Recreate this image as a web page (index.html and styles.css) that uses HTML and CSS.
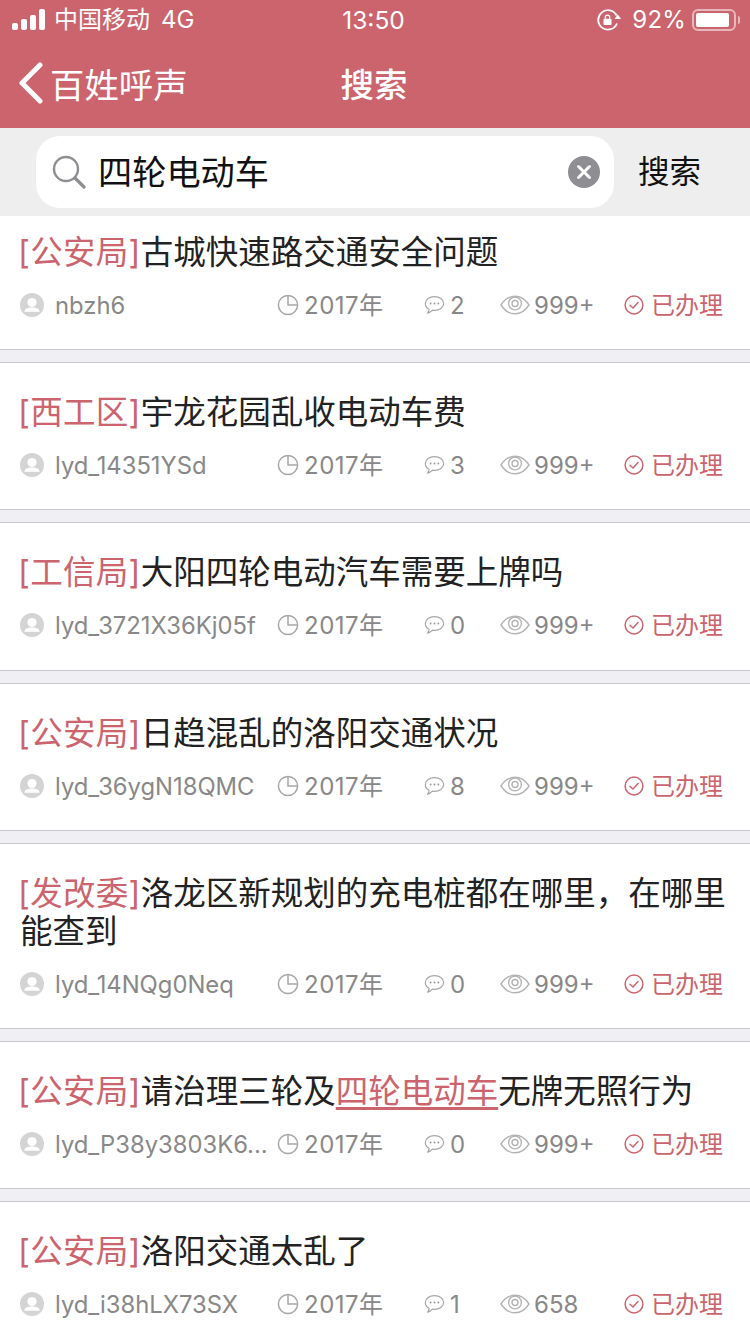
FILE: index.html
```html
<!DOCTYPE html>
<html lang="zh-CN">

<head>
  <meta charset="UTF-8">
  <meta name="viewport" content="width=device-width, initial-scale=1.0">
  <title>搜索</title>
  <link rel="stylesheet" href="styles.css">
</head>

<body>
  <svg class="sprites" width="0" height="0">
    <symbol id="i-user" viewBox="0 0 24 24">
      <circle cx="12" cy="12" r="12" fill="#d4d4d4" />
      <circle cx="12" cy="9.5" r="4.6" fill="#fff" />
      <path d="M4.5 18.2c0-2.4 3.4-3.6 7.5-3.6s7.5 1.2 7.5 3.6v.6h-15z" fill="#fff" />
    </symbol>
    <symbol id="i-clock" viewBox="0 0 22 22">
      <circle cx="11" cy="11" r="9.6" fill="none" stroke="#a8a8a8" stroke-width="1.5" />
      <path d="M11 1.6V11h9.4" fill="none" stroke="#a8a8a8" stroke-width="1.5" />
    </symbol>
    <symbol id="i-comment" viewBox="0 0 22 20">
      <path d="M11 1.2c5.2 0 9.6 3 9.6 7.2s-4.400 7.200-9.600 7.200c-.8 0-1.500-.1-2.200-.2-1.200 1.400-2.900 2.700-5 3.100.9-1 1.500-2.300 1.500-4C2.900 13.300 1.400 11 1.400 8.400 1.400 4.200 5.800 1.200 11 1.200z" fill="none" stroke="#a8a8a8" stroke-width="1.300" stroke-linejoin="round" />
      <circle cx="7" cy="8.400" r="1" fill="#999" />
      <circle cx="11" cy="8.400" r="1" fill="#999" />
      <circle cx="15" cy="8.400" r="1" fill="#999" />
    </symbol>
    <symbol id="i-eye" viewBox="0 0 30 20">
      <path d="M1 10C4.500 4.500 9.500 1.200 15 1.200S25.500 4.500 29 10c-3.500 5.500-8.500 8.800-14 8.800S4.500 15.500 1 10z" fill="none" stroke="#b4b4b4" stroke-width="1.400" />
      <circle cx="15" cy="8.500" r="6.400" fill="none" stroke="#b4b4b4" stroke-width="1.400" />
      <circle cx="15" cy="8.500" r="3" fill="none" stroke="#b4b4b4" stroke-width="1.400" />
    </symbol>
    <symbol id="i-check" viewBox="0 0 20 20">
      <circle cx="10" cy="10" r="8.900" fill="none" stroke="#cb646d" stroke-width="1.500" />
      <path d="M6 10.200l3 2.800 5-5.400" fill="none" stroke="#cb646d" stroke-width="1.500" stroke-linecap="round" stroke-linejoin="round" />
    </symbol>
  </svg>

  <header class="top">
    <div class="status">
      <div class="status-left">
        <span class="signal"><i></i><i></i><i></i><i></i></span>
        <span>中国移动</span>
        <span class="net">4G</span>
      </div>
      <div class="status-time">13:50</div>
      <div class="status-right">
        <svg class="lock" width="24" height="22" viewBox="0 0 24 22">
          <path d="M19.600 6.500A9.700 9.700 0 1 0 20 14.500" fill="none" stroke="#fff" stroke-width="1.800" />
          <path d="M17.500 10h6.500l-3.200-4.500z" fill="#fff" />
          <rect x="6.500" y="9.800" width="8" height="6.200" rx="1" fill="#fff" />
          <path d="M8.300 9.800V8.300a2.200 2.200 0 0 1 4.400 0v1.500" fill="none" stroke="#fff" stroke-width="1.300" />
        </svg>
        <span class="pct">92%</span>
        <span class="battery"><i></i></span>
      </div>
    </div>
    <nav class="nav">
      <div class="back">
        <svg width="26" height="42" viewBox="0 0 26 42">
          <path d="M23 3L5 21l18 18" fill="none" stroke="#fff" stroke-width="5" stroke-linecap="round" stroke-linejoin="round" />
        </svg>
        <span>百姓呼声</span>
      </div>
      <h1 class="nav-title">搜索</h1>
    </nav>
  </header>

  <div class="search">
    <div class="search-box">
      <svg class="search-icon" width="34" height="34" viewBox="0 0 34 34">
        <circle cx="14" cy="14" r="12" fill="none" stroke="#8e8e93" stroke-width="2.400" />
        <path d="M23 23l9 9" fill="none" stroke="#8e8e93" stroke-width="3.200" stroke-linecap="round" />
      </svg>
      <span class="search-text">四轮电动车</span>
      <span class="search-clear">
        <svg width="32" height="32" viewBox="0 0 32 32">
          <circle cx="16" cy="16" r="16" fill="#8e8e93" />
          <path d="M10.500 10.500l11 11M21.500 10.500l-11 11" fill="none" stroke="#fff" stroke-width="3" stroke-linecap="round" />
        </svg>
      </span>
    </div>
    <div class="search-btn">搜索</div>
  </div>

  <main class="list">
    <article class="item item-first">
      <div class="item-title"><span class="dept">[公安局]</span>古城快速路交通安全问题</div>
      <div class="meta">
        <div class="cell"><svg class="ic-user"><use href="#i-user" /></svg><span class="name">nbzh6</span></div>
        <div class="cell"><svg class="ic-clock"><use href="#i-clock" /></svg><span class="year">2017年</span></div>
        <div class="cell"><svg class="ic-comment"><use href="#i-comment" /></svg><span>2</span></div>
        <div class="cell"><svg class="ic-eye"><use href="#i-eye" /></svg><span>999+</span></div>
        <div class="cell done"><svg class="ic-check"><use href="#i-check" /></svg><span>已办理</span></div>
      </div>
    </article>
    <article class="item">
      <div class="item-title"><span class="dept">[西工区]</span>宇龙花园乱收电动车费</div>
      <div class="meta">
        <div class="cell"><svg class="ic-user"><use href="#i-user" /></svg><span class="name">lyd_14351YSd</span></div>
        <div class="cell"><svg class="ic-clock"><use href="#i-clock" /></svg><span class="year">2017年</span></div>
        <div class="cell"><svg class="ic-comment"><use href="#i-comment" /></svg><span>3</span></div>
        <div class="cell"><svg class="ic-eye"><use href="#i-eye" /></svg><span>999+</span></div>
        <div class="cell done"><svg class="ic-check"><use href="#i-check" /></svg><span>已办理</span></div>
      </div>
    </article>
    <article class="item">
      <div class="item-title"><span class="dept">[工信局]</span>大阳四轮电动汽车需要上牌吗</div>
      <div class="meta">
        <div class="cell"><svg class="ic-user"><use href="#i-user" /></svg><span class="name">lyd_3721X36Kj05f</span></div>
        <div class="cell"><svg class="ic-clock"><use href="#i-clock" /></svg><span class="year">2017年</span></div>
        <div class="cell"><svg class="ic-comment"><use href="#i-comment" /></svg><span>0</span></div>
        <div class="cell"><svg class="ic-eye"><use href="#i-eye" /></svg><span>999+</span></div>
        <div class="cell done"><svg class="ic-check"><use href="#i-check" /></svg><span>已办理</span></div>
      </div>
    </article>
    <article class="item">
      <div class="item-title"><span class="dept">[公安局]</span>日趋混乱的洛阳交通状况</div>
      <div class="meta">
        <div class="cell"><svg class="ic-user"><use href="#i-user" /></svg><span class="name">lyd_36ygN18QMC</span></div>
        <div class="cell"><svg class="ic-clock"><use href="#i-clock" /></svg><span class="year">2017年</span></div>
        <div class="cell"><svg class="ic-comment"><use href="#i-comment" /></svg><span>8</span></div>
        <div class="cell"><svg class="ic-eye"><use href="#i-eye" /></svg><span>999+</span></div>
        <div class="cell done"><svg class="ic-check"><use href="#i-check" /></svg><span>已办理</span></div>
      </div>
    </article>
    <article class="item">
      <div class="item-title"><span class="dept">[发改委]</span>洛龙区新规划的充电桩都在哪里，在哪里能查到</div>
      <div class="meta">
        <div class="cell"><svg class="ic-user"><use href="#i-user" /></svg><span class="name">lyd_14NQg0Neq</span></div>
        <div class="cell"><svg class="ic-clock"><use href="#i-clock" /></svg><span class="year">2017年</span></div>
        <div class="cell"><svg class="ic-comment"><use href="#i-comment" /></svg><span>0</span></div>
        <div class="cell"><svg class="ic-eye"><use href="#i-eye" /></svg><span>999+</span></div>
        <div class="cell done"><svg class="ic-check"><use href="#i-check" /></svg><span>已办理</span></div>
      </div>
    </article>
    <article class="item">
      <div class="item-title"><span class="dept">[公安局]</span>请治理三轮及<span class="hit">四轮电动车</span>无牌无照行为</div>
      <div class="meta">
        <div class="cell"><svg class="ic-user"><use href="#i-user" /></svg><span class="name">lyd_P38y3803K6...</span></div>
        <div class="cell"><svg class="ic-clock"><use href="#i-clock" /></svg><span class="year">2017年</span></div>
        <div class="cell"><svg class="ic-comment"><use href="#i-comment" /></svg><span>0</span></div>
        <div class="cell"><svg class="ic-eye"><use href="#i-eye" /></svg><span>999+</span></div>
        <div class="cell done"><svg class="ic-check"><use href="#i-check" /></svg><span>已办理</span></div>
      </div>
    </article>
    <article class="item">
      <div class="item-title"><span class="dept">[公安局]</span>洛阳交通太乱了</div>
      <div class="meta">
        <div class="cell"><svg class="ic-user"><use href="#i-user" /></svg><span class="name">lyd_i38hLX73SX</span></div>
        <div class="cell"><svg class="ic-clock"><use href="#i-clock" /></svg><span class="year">2017年</span></div>
        <div class="cell"><svg class="ic-comment"><use href="#i-comment" /></svg><span>1</span></div>
        <div class="cell"><svg class="ic-eye"><use href="#i-eye" /></svg><span>658</span></div>
        <div class="cell done"><svg class="ic-check"><use href="#i-check" /></svg><span>已办理</span></div>
      </div>
    </article>
  </main>
</body>

</html>
```

FILE: styles.css
```css
html,
body {
  height: 1334px;
  overflow: hidden;
}

body {
  margin: 0;
  background-color: #fff;
  color: #222;
  font-family: Inter, "Noto Sans CJK SC", sans-serif;
}

.sprites {
  display: block;
  height: 0;
}

/* header */
.top {
  background-color: #cb646d;
  color: #fff;
  height: 128px;
}

.status {
  height: 40px;
  display: grid;
  grid-template-columns: 1fr auto 1fr;
  align-items: center;
  padding: 0 10px 1px 12px;
  box-sizing: border-box;
  font-size: 24px;
  line-height: 30px;
}

.status-left,
.status-right {
  display: flex;
  align-items: center;
}

.status-right {
  justify-content: flex-end;
  gap: 9px;
}

.status-time {
  font-size: 24.500px;
  margin-left: -5px;
}

.signal {
  display: flex;
  align-items: flex-end;
  gap: 3px;
  height: 21px;
  margin-right: 9px;
}

.signal i {
  width: 6px;
  border-radius: 2px;
  background-color: #fff;
}

.signal i:nth-child(1) { height: 7px; }
.signal i:nth-child(2) { height: 11px; }
.signal i:nth-child(3) { height: 15px; }
.signal i:nth-child(4) { height: 21px; }

.net {
  margin-left: 11px;
}

.lock {
  margin-right: 2px;
}

.pct {
  letter-spacing: .2px;
}

.battery {
  width: 44px;
  height: 22px;
  box-sizing: border-box;
  border: 2px solid #e6b7bb;
  border-radius: 6px;
  padding: 2px;
  margin-left: -3px;
  margin-right: 4px;
  display: flex;
  position: relative;
}

.battery::after {
  content: "";
  position: absolute;
  right: -6px;
  top: 5px;
  width: 2px;
  height: 8px;
  border-radius: 0 2px 2px 0;
  background-color: #e6b7bb;
}

.battery i {
  width: 33px;
  border-radius: 2px;
  background-color: #fff;
}

.nav {
  height: 88px;
  display: grid;
  grid-template-columns: 1fr auto 1fr;
  align-items: center;
  padding-bottom: 3px;
  box-sizing: border-box;
}

.back {
  display: flex;
  align-items: center;
  gap: 7px;
  padding-left: 17px;
  font-size: 34.400px;
}

.nav-title {
  margin: 0 0 0 -2px;
  font-size: 33.500px;
  font-weight: 500;
}

/* search */
.search {
  height: 88px;
  box-sizing: border-box;
  padding: 8px 0 8px 36px;
  background-color: #eee;
  display: flex;
}

.search-box {
  width: 578px;
  height: 72px;
  box-sizing: border-box;
  padding: 0 14px 0 16px;
  border-radius: 24px;
  background-color: #fff;
  display: flex;
  align-items: center;
}

.search-text {
  margin-left: 12px;
  margin-bottom: 5px;
  font-size: 34.200px;
  color: #111;
}

.search-clear {
  margin-left: auto;
  display: flex;
}

.search-btn {
  margin-left: 24px;
  line-height: 72px;
  font-size: 31.500px;
  color: #111;
}

/* list */
.item {
  padding: 30px 0 36.250px;
  border-bottom: 1px solid #c8c7cc;
  background-color: #fff;
  position: relative;
}

.item::after {
  content: "";
  position: absolute;
  left: 0;
  right: 0;
  bottom: 0;
  height: 12px;
  background-color: #efeff4;
  border-top: 1px solid #c8c7cc;
}

.item-first {
  padding-top: 16.750px;
}

.item-title {
  padding: 1px 20px 0;
  margin-bottom: -1px;
  font-size: 32.500px;
  line-height: 38px;
  color: #222;
}

.dept {
  color: #cb646d;
  margin-left: -2px;
  letter-spacing: .3px;
}

.hit {
  color: #cb646d;
  text-decoration: underline;
  text-underline-offset: 4px;
}

.item:has(.hit) .item-title {
  white-space: nowrap;
}

.meta {
  display: grid;
  grid-template-columns: 258px 146px 76px 124px 1fr;
  align-items: center;
  height: 40px;
  margin-top: 15px;
  padding-left: 20px;
  font-size: 24px;
  line-height: 30px;
  color: #888;
}

.cell {
  display: flex;
  align-items: center;
  white-space: nowrap;
  min-width: 0;
}

.cell svg {
  margin-bottom: 2px;
}

.name {
  overflow: hidden;
  font-size: 23.800px;
}

.year {
  letter-spacing: .5px;
}

.done {
  color: #cb646d;
}

.ic-user {
  width: 24px;
  height: 24px;
  margin-right: 11px;
  flex: none;
}

.ic-clock {
  width: 22px;
  height: 22px;
  margin-right: 5px;
  margin-left: -1px;
}

.ic-comment {
  width: 21px;
  height: 20px;
  margin-right: 5px;
}

.ic-eye {
  width: 30px;
  height: 20px;
  margin-right: 4px;
}

.ic-check {
  width: 20px;
  height: 20px;
  margin-right: 7px;
}
```
